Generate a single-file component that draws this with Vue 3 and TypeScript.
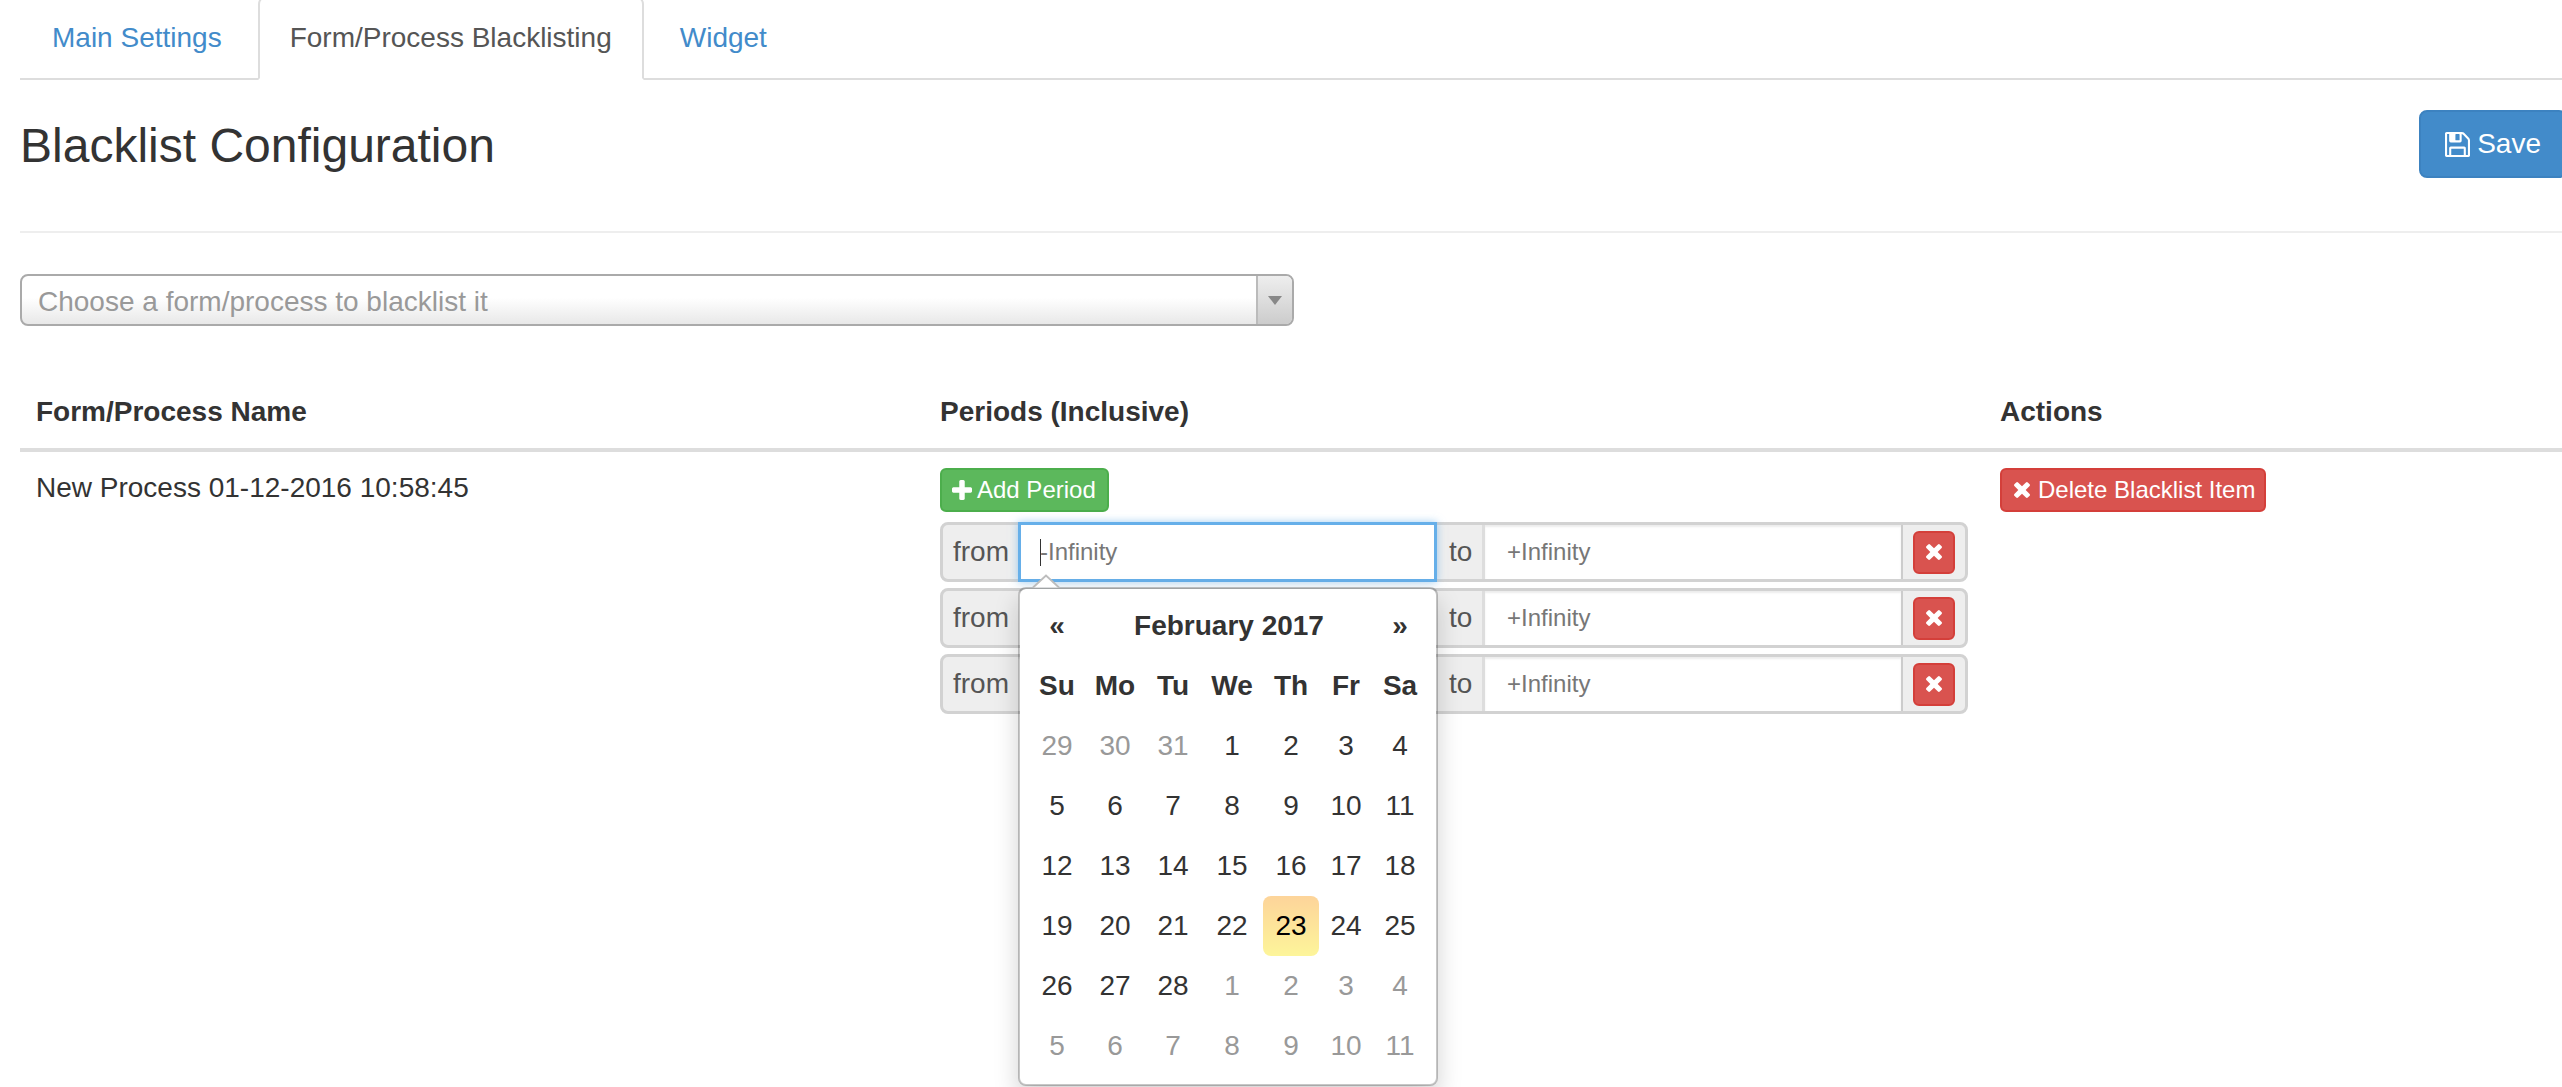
<script setup lang="ts">
interface Day { label: number; muted: boolean; today: boolean }

const tabs: string[] = ['Main Settings', 'Form/Process Blacklisting', 'Widget']
const weekdays: string[] = ['Su', 'Mo', 'Tu', 'We', 'Th', 'Fr', 'Sa']

const labels: number[] = [
  29, 30, 31, 1, 2, 3, 4,
  5, 6, 7, 8, 9, 10, 11,
  12, 13, 14, 15, 16, 17, 18,
  19, 20, 21, 22, 23, 24, 25,
  26, 27, 28, 1, 2, 3, 4,
  5, 6, 7, 8, 9, 10, 11,
]
const days: Day[] = labels.map((label, i) => ({
  label,
  muted: i < 3 || i >= 31,
  today: i === 25,
}))
const periods: number[] = [0, 1, 2]
const timesPath =
  'M1298 1214q0 40-28 68l-136 136q-28 28-68 28t-68-28l-294-294-294 294q-28 28-68 28t-68-28l-136-136q-28-28-28-68t28-68l294-294-294-294q-28-28-28-68t28-68l136-136q28-28 68-28t68 28l294 294 294-294q28-28 68-28t68 28l136 136q28 28 28 68t-28 68l-294 294 294 294q28 28 28 68z'
</script>

<template>
  <div class="page">
    <div class="content">
      <ul class="tabs">
        <li v-for="(t, i) in tabs" :key="t" class="tab" :class="{ active: i === 1 }">{{ t }}</li>
      </ul>

      <div class="header">
        <h2 class="title">Blacklist Configuration</h2>
        <button class="btn-save">
          <svg class="save-icon" viewBox="0 0 1536 1536" fill="currentColor">
            <path d="M384 1408h768v-384h-768v384zm896 0h128v-896q0-14-10-38.5t-20-34.5l-281-281q-10-10-34-20t-39-10v416q0 40-28 68t-68 28h-576q-40 0-68-28t-28-68v-416h-128v1280h128v-416q0-40 28-68t68-28h832q40 0 68 28t28 68v416zm-384-928v-320q0-13-9.5-22.5t-22.5-9.5h-192q-13 0-22.5 9.5t-9.5 22.5v320q0 13 9.5 22.5t22.5 9.5h192q13 0 22.5-9.5t9.5-22.5zm640 32v928q0 40-28 68t-68 28h-1344q-40 0-68-28t-28-68v-1344q0-40 28-68t68-28h928q40 0 88 20t76 48l280 280q28 28 48 76t20 88z" />
          </svg>
          <span>Save</span>
        </button>
      </div>

      <hr class="rule" />

      <div class="select">
        <span class="select-text">Choose a form/process to blacklist it</span>
        <span class="select-arrow"><i class="triangle"></i></span>
      </div>

      <table class="table">
        <colgroup>
          <col class="col-name" />
          <col class="col-periods" />
          <col />
        </colgroup>
        <thead>
          <tr>
            <th>Form/Process Name</th>
            <th>Periods (Inclusive)</th>
            <th>Actions</th>
          </tr>
        </thead>
        <tbody>
          <tr>
            <td>New Process 01-12-2016 10:58:45</td>
            <td>
              <button class="btn-sm green">
                <svg class="plus-icon" viewBox="0 128 1408 1408" fill="currentColor">
                  <path d="M1408 736v192q0 40-28 68t-68 28h-416v416q0 40-28 68t-68 28h-192q-40 0-68-28t-28-68v-416h-416q-40 0-68-28t-28-68v-192q0-40 28-68t68-28h416v-416q0-40 28-68t68-28h192q40 0 68 28t28 68v416h416q40 0 68 28t28 68z" />
                </svg>
                <span>Add Period</span>
              </button>

              <div v-for="p in periods" :key="p" class="period">
                <span class="addon from">from</span>
                <div class="field-wrap" :class="{ focused: p === 0 }">
                  <input class="field" type="text" placeholder="-Infinity" />
                  <i v-if="p === 0" class="caret-bar"></i>
                </div>
                <span class="addon to">to</span>
                <input class="field end" type="text" placeholder="+Infinity" />
                <span class="addon action">
                  <button class="btn-x">
                    <svg class="x-icon" viewBox="110 258 1188 1188" fill="currentColor"><path :d="timesPath" /></svg>
                  </button>
                </span>

                <div v-if="p === 0" class="calendar">
                  <svg class="cal-caret" viewBox="0 0 28 15">
                    <path d="M0 14 L14 1 L28 14" fill="#fff" stroke="#bdbdbd" stroke-width="2" />
                  </svg>
                  <div class="cal-grid">
                    <span class="cal-nav">«</span>
                    <span class="cal-title">February 2017</span>
                    <span class="cal-nav">»</span>
                    <span v-for="w in weekdays" :key="w" class="cal-head">{{ w }}</span>
                    <span
                      v-for="(d, i) in days"
                      :key="i"
                      class="cal-day"
                      :class="{ muted: d.muted, today: d.today }"
                    >{{ d.label }}</span>
                  </div>
                </div>
              </div>
            </td>
            <td>
              <button class="btn-sm red">
                <svg class="del-icon" viewBox="110 258 1188 1188" fill="currentColor"><path :d="timesPath" /></svg>
                <span>Delete Blacklist Item</span>
              </button>
            </td>
          </tr>
        </tbody>
      </table>
    </div>
  </div>
</template>

<style>
html,
body {
  margin: 0;
  background: #fff;
}
</style>

<style scoped>
* {
  box-sizing: border-box;
}

.page {
  width: 2562px;
  height: 1087px;
  overflow: hidden;
  padding-left: 20px;
  font-family: "Liberation Sans", Arial, sans-serif;
  font-size: 28px;
  line-height: 40px;
  color: #333;
}

.content {
  width: 2547px;
}

.tabs {
  display: flex;
  list-style: none;
  margin: -4px 0 0;
  padding: 0;
  border-bottom: 2px solid #ddd;
  height: 84px;
}

.tab {
  height: 84px;
  padding: 20px 30px;
  margin-right: 4px;
  border: 2px solid transparent;
  border-radius: 8px 8px 0 0;
  color: #428bca;
}

.tab.active {
  border-color: #ddd #ddd #fff;
  background: #fff;
  color: #555;
}

.header {
  display: flex;
  justify-content: space-between;
  align-items: flex-start;
  padding-top: 30px;
}

.title {
  margin: 9px 0 0;
  font-size: 48px;
  font-weight: 400;
  line-height: 53px;
}

.btn-save {
  display: flex;
  align-items: center;
  gap: 7px;
  height: 68px;
  padding: 0 24px;
  border: 2px solid #3c82c0;
  border-radius: 8px;
  background: #428bca;
  color: #fff;
  font: inherit;
}

.save-icon {
  width: 25px;
  height: 25px;
}

.rule {
  margin: 53px 0 0;
  border: 0;
  border-top: 2px solid #eee;
}

.select {
  display: flex;
  width: 1274px;
  height: 52px;
  margin-top: 41px;
  border: 2px solid #aaa;
  border-radius: 8px;
  background: linear-gradient(#fff 45%, #e8e8e8 100%);
  overflow: hidden;
}

.select-text {
  flex: 1;
  padding-left: 16px;
  line-height: 52px;
  color: #999;
}

.select-arrow {
  display: flex;
  align-items: center;
  justify-content: center;
  width: 36px;
  border-left: 2px solid #bbb;
  background: linear-gradient(#eee, #ccc);
}

.triangle {
  width: 0;
  height: 0;
  margin-top: 1px;
  border-left: 7px solid transparent;
  border-right: 7px solid transparent;
  border-top: 9px solid #888;
}

.table {
  width: 100%;
  margin-top: 50px;
  border-collapse: collapse;
  table-layout: fixed;
}

.col-name {
  width: 904px;
}

.col-periods {
  width: 1060px;
}

.table th {
  padding: 16px;
  border-bottom: 4px solid #ddd;
  font-weight: 700;
  text-align: left;
}

.table td {
  padding: 16px;
  vertical-align: top;
}

.btn-sm {
  display: inline-flex;
  align-items: center;
  height: 44px;
  border: 2px solid;
  border-radius: 6px;
  color: #fff;
  font: inherit;
  font-size: 24px;
  line-height: 36px;
  vertical-align: top;
}

.green {
  padding: 0 11px 0 10px;
  gap: 5px;
  background: #5cb85c;
  border-color: #4cae4c;
}

.red {
  padding: 0 9px 0 12px;
  gap: 8px;
  background: #d9534f;
  border-color: #d43f3a;
}

.plus-icon {
  width: 20px;
  height: 20px;
}

.del-icon {
  width: 16px;
  height: 16px;
}

.period {
  position: relative;
  display: flex;
  width: 1028px;
  height: 60px;
  margin-top: 6px;
  border: 3px solid #d2d2d2;
  border-radius: 8px;
  background: #eee;
}

.btn-sm + .period {
  margin-top: 10px;
}

.addon {
  flex: none;
  font-size: 28px;
  line-height: 54px;
  color: #555;
}

.from {
  width: 75px;
  padding-left: 10px;
}

.to {
  width: 48px;
  padding-left: 12px;
  border-right: 3px solid #ddd;
}

.field-wrap {
  position: relative;
  flex: none;
  width: 419px;
}

.field {
  display: block;
  width: 100%;
  height: 100%;
  margin: 0;
  padding: 0 20px;
  border: 0;
  outline: 0;
  background: #fff;
  box-shadow: inset 0 2px 2px rgba(0, 0, 0, 0.075);
  font: inherit;
  font-size: 24px;
  color: #555;
}

.field::placeholder {
  color: #777;
  opacity: 1;
}

.field.end {
  flex: 1;
  width: auto;
  min-width: 0;
  padding: 0 22px;
  border-right: 2px solid #ccc;
}

.focused {
  margin: -3px 0;
  border: 3px solid #66afe9;
  box-shadow: 0 0 8px rgba(102, 175, 233, 0.6);
  z-index: 1;
}

.focused .field {
  padding: 0 19px;
  box-shadow: none;
}

.caret-bar {
  position: absolute;
  left: 19px;
  top: 14px;
  width: 1px;
  height: 27px;
  background: #333;
}

.action {
  display: flex;
  align-items: center;
  justify-content: center;
  width: 62px;
}

.btn-x {
  display: flex;
  align-items: center;
  justify-content: center;
  width: 42px;
  height: 43px;
  padding: 0;
  border: 2px solid #d43f3a;
  border-radius: 6px;
  background: #d9534f;
  color: #fff;
}

.x-icon {
  width: 16px;
  height: 16px;
}

.calendar {
  position: absolute;
  left: 75px;
  top: 62px;
  z-index: 10;
  width: 420px;
  height: 499px;
  padding: 7px 9px 8px;
  border: 2px solid rgba(0, 0, 0, 0.22);
  border-radius: 8px;
  background: #fff;
  background-clip: padding-box;
  box-shadow: 0 12px 24px rgba(0, 0, 0, 0.175);
}

.cal-caret {
  position: absolute;
  left: 13px;
  top: -15px;
  width: 26px;
  height: 15px;
  overflow: visible;
}

.cal-grid {
  display: grid;
  grid-template-columns: 56px 60px 56px 62px 56px 54px 54px;
  grid-auto-rows: 60px;
  text-align: center;
  line-height: 60px;
}

.cal-nav {
  font-weight: 700;
}

.cal-title {
  grid-column: span 5;
  font-weight: 700;
}

.cal-head {
  font-weight: 700;
}

.muted {
  color: #999;
}

.today {
  border-radius: 8px;
  background: linear-gradient(#fdd49a, #fdf59a);
  color: #000;
}
</style>
